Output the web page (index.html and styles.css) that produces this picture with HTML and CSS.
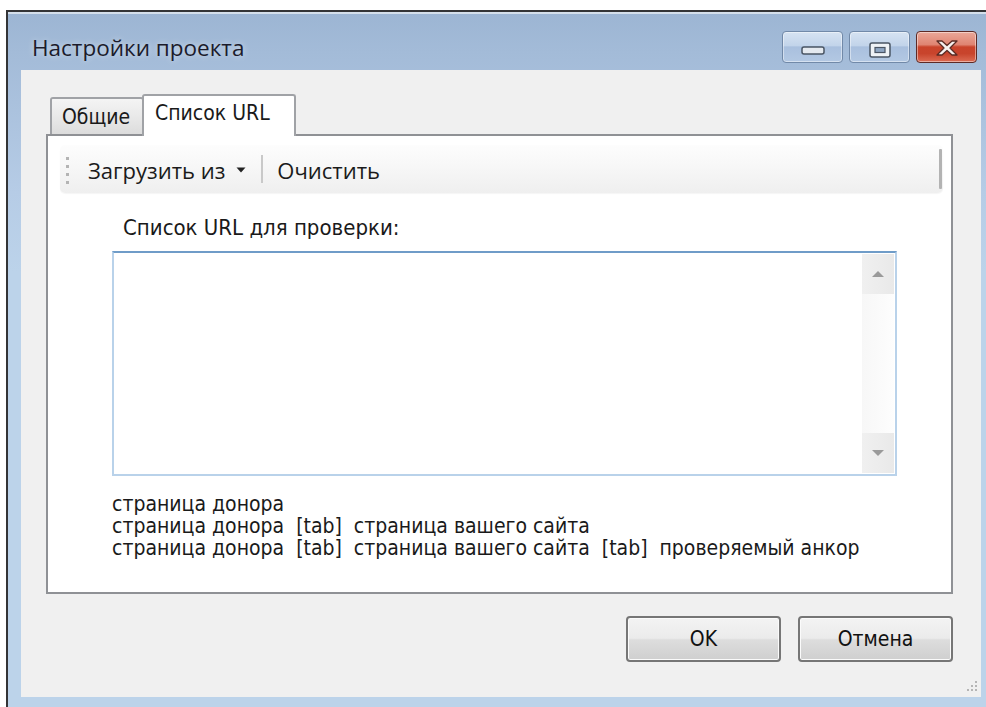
FILE: index.html
```html
<!DOCTYPE html>
<html lang="ru">
<head>
<meta charset="utf-8">
<title>Настройки проекта</title>
<link rel="stylesheet" href="styles.css">
</head>
<body>
<div class="topline"></div>
<div class="window">
  <div class="titlebar">
    <div class="title">Настройки проекта</div>
    <div class="caption-buttons">
      <div class="cap-btn">
        <svg width="24" height="9" viewBox="0 0 24 9"><rect x="1" y="1" width="22" height="7" rx="2" fill="#e4e9ef" stroke="#4a5564" stroke-width="1.5"/></svg>
      </div>
      <div class="cap-btn">
        <svg width="22" height="16" viewBox="0 0 22 16"><rect x="1" y="1" width="20" height="14" rx="2" fill="#eef2f6" stroke="#4a5564" stroke-width="1.5"/><rect x="6" y="5.5" width="10" height="5" fill="#8ea6c2" stroke="#4a5564" stroke-width="1.2"/></svg>
      </div>
      <div class="cap-btn close">
        <svg width="26" height="18" viewBox="0 0 26 18"><path d="M3 2 L8 2 L13 6.5 L18 2 L23 2 L16 9 L23 16 L18 16 L13 11.5 L8 16 L3 16 L10 9 Z" fill="#f7f2f0" stroke="#5a2b24" stroke-width="1.3" stroke-linejoin="round"/></svg>
      </div>
    </div>
  </div>
  <div class="client">
    <div class="tabs">
      <div class="tab">Общие</div>
      <div class="tab active">Список URL</div>
    </div>
    <div class="panel">
      <div class="toolbar">
        <div class="grip"><i></i><i></i><i></i><i></i></div>
        <div class="tb-item">Загрузить из</div>
        <svg class="tb-arrow" width="10" height="6" viewBox="0 0 10 6"><path d="M0.5 0.5 L9.5 0.5 L5 5.5 Z" fill="#222"/></svg>
        <div class="tb-sep"></div>
        <div class="tb-item">Очистить</div>
        <div class="tb-end"></div>
      </div>
      <div class="content">
        <div class="label">Список URL для проверки:</div>
        <div class="textbox">
          <div class="text-area"></div>
          <div class="vscroll">
            <div class="sb-btn">
              <svg width="14" height="8" viewBox="0 0 14 8"><path d="M1 7 L7 1 L13 7 Z" fill="#9a9a9a"/></svg>
            </div>
            <div class="sb-track"></div>
            <div class="sb-btn">
              <svg width="14" height="8" viewBox="0 0 14 8"><path d="M1 1 L13 1 L7 7 Z" fill="#9a9a9a"/></svg>
            </div>
          </div>
        </div>
        <div class="hints">
          <div class="hint">страница донора</div>
          <div class="hint">страница донора  [tab]  страница вашего сайта</div>
          <div class="hint">страница донора  [tab]  страница вашего сайта  [tab]  проверяемый анкор</div>
        </div>
      </div>
    </div>
    <div class="dialog-buttons">
      <div class="btn">OK</div>
      <div class="btn">Отмена</div>
    </div>
    <svg class="size-grip" width="16" height="16" viewBox="0 0 16 16">
      <g fill="#b5b5b5">
        <rect x="12" y="2" width="2" height="2"/>
        <rect x="8" y="6" width="2" height="2"/><rect x="12" y="6" width="2" height="2"/>
        <rect x="4" y="10" width="2" height="2"/><rect x="8" y="10" width="2" height="2"/><rect x="12" y="10" width="2" height="2"/>
      </g>
    </svg>
  </div>
</div>
</body>
</html>
```
FILE: styles.css
```css
html, body {
  margin: 0;
  padding: 0;
  background: #ffffff;
  overflow: hidden;
}

.topline {
  height: 10px;
  overflow: hidden;
}

/* Aero window frame */
.window {
  margin-left: 6px;
  width: 980px;
  height: 697px;
  box-sizing: border-box;
  border-top: 2px solid #333436;
  border-left: 2px solid #333436;
  padding: 0 5px 0 13px;
  background: linear-gradient(to bottom, #9cb5d3 0px, #a3bbd8 40px, #b6cce6 180px, #bcd3ea 260px, #bcd3ea 100%);
  box-shadow: inset 0 2px 0 #d4dfeb;
}

.titlebar {
  height: 58px;
  display: flex;
  align-items: flex-start;
  justify-content: space-between;
  padding: 0 4px 0 11px;
}

.title {
  font-family: "Open Sans", "Noto Sans", sans-serif;
  font-size: 22.5px;
  color: #1b1b2b;
  margin-top: 20px;
  line-height: 32px;
  text-shadow: 0 0 6px rgba(255, 255, 255, 0.6);
}

.caption-buttons {
  display: flex;
  gap: 6px;
  margin-top: 19px;
}

.cap-btn {
  width: 61px;
  height: 32px;
  box-sizing: border-box;
  border: 1px solid #7189a8;
  border-radius: 4px;
  background: linear-gradient(to bottom, #d6e3f2 0%, #c2d4ea 45%, #a9c0de 50%, #b3c8e3 100%);
  box-shadow: inset 0 0 0 1px rgba(255, 255, 255, 0.45);
  display: flex;
  align-items: center;
  justify-content: center;
  padding-top: 6px;
}

.cap-btn.close {
  border-color: #5e2a25;
  background: linear-gradient(to bottom, #eaa899 0%, #df8472 42%, #c9432b 50%, #c8442c 72%, #dc6c54 100%);
  padding-top: 2px;
}

/* Dialog client area */
.client {
  position: relative;
  height: 627px;
  background: #f0f0f0;
  padding: 24px 0 0 25px;
  box-sizing: border-box;
}

.tabs {
  display: flex;
  align-items: flex-end;
  height: 40px;
  margin-left: 4px;
  font-family: "DejaVu Sans Condensed", "Liberation Sans", sans-serif;
  font-size: 21px;
  color: #1a1a1a;
}

.tab {
  width: 94px;
  height: 37px;
  box-sizing: border-box;
  border: 2px solid #a0a2a6;
  border-bottom: none;
  border-radius: 3px 3px 0 0;
  background: linear-gradient(to bottom, #f4f4f4 0%, #e9e9e9 50%, #dcdcdc 100%);
  margin-right: -2px;
  padding: 6px 0 0 10px;
}

.tab.active {
  position: relative;
  z-index: 1;
  width: 154px;
  height: 42px;
  margin-bottom: -2px;
  background: #ffffff;
  padding: 5px 0 0 11px;
}

.panel {
  width: 907px;
  height: 460px;
  box-sizing: border-box;
  border: 2px solid #8f9195;
  background: #ffffff;
  padding: 9px 8px 0 12px;
}

.toolbar {
  height: 48px;
  border-radius: 5px;
  background: linear-gradient(to bottom, #fdfdfd 0%, #f7f7f7 45%, #efefef 100%);
  box-shadow: 0 1px 1px rgba(0, 0, 0, 0.04);
  display: flex;
  align-items: center;
  padding-left: 6px;
  font-family: "Open Sans", "Noto Sans", sans-serif;
  font-size: 22px;
  color: #1b1b1b;
}

.grip {
  display: flex;
  flex-direction: column;
  gap: 5px;
  margin-top: 2px;
}

.grip i {
  display: block;
  width: 3px;
  height: 3px;
  background: #b4b4b4;
}

.tb-item {
  padding-top: 1px;
}

.toolbar .grip + .tb-item {
  margin-left: 19px;
}

.tb-arrow {
  margin-left: 11px;
  margin-top: 2px;
}

.tb-sep {
  width: 2px;
  height: 28px;
  background: #c9c9c9;
  margin: 0 14px 0 15px;
}

.tb-end {
  margin-left: auto;
  margin-right: 1px;
  width: 3px;
  height: 40px;
  border-radius: 1px;
  background: #b3b3b3;
}

.content {
  margin-left: 52px;
  width: 785px;
  font-family: "DejaVu Sans Condensed", "Liberation Sans", sans-serif;
  font-size: 21px;
  color: #1a1a1a;
}

.label {
  margin-top: 23px;
  margin-left: 11px;
  line-height: 24px;
  font-size: 22px;
}

.textbox {
  margin-top: 11px;
  height: 225px;
  box-sizing: border-box;
  border: 2px solid #b9d2ea;
  border-top-color: #6f9cc8;
  display: flex;
  background: #ffffff;
}

.text-area {
  flex: 1;
}

.vscroll {
  width: 32px;
  margin: 1px 1px 1px 0;
  display: flex;
  flex-direction: column;
  background: #fafafa;
}

.sb-btn {
  height: 40px;
  background: linear-gradient(to right, #f0f0f0, #e9e9e9);
  display: flex;
  align-items: center;
  justify-content: center;
}

.sb-track {
  flex: 1;
  background: linear-gradient(to right, #f7f7f7, #fdfdfd);
}

.hints {
  margin-top: 17px;
  line-height: 22px;
}

.hint {
  white-space: pre;
}

.dialog-buttons {
  width: 907px;
  display: flex;
  justify-content: flex-end;
  gap: 17px;
  margin-top: 22px;
}

.btn {
  width: 155px;
  height: 46px;
  box-sizing: border-box;
  border: 2px solid #767676;
  border-radius: 4px;
  background: linear-gradient(to bottom, #f3f3f3 0%, #ebebeb 48%, #dddddd 52%, #cfcfcf 100%);
  box-shadow: inset 0 0 0 1px #fbfbfb;
  display: flex;
  align-items: center;
  justify-content: center;
  font-family: "DejaVu Sans Condensed", "Liberation Sans", sans-serif;
  font-size: 21px;
  color: #111111;
}

.size-grip {
  position: absolute;
  right: 2px;
  bottom: 2px;
}
```
